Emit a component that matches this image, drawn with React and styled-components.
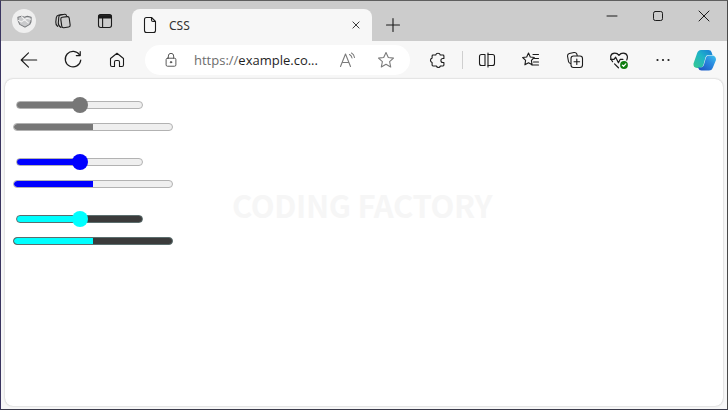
import React from 'react'
import styled, { createGlobalStyle } from 'styled-components'

const Global = createGlobalStyle`
  html, body { margin: 0; padding: 0; background: #f7f7f7; overflow: hidden; }
  * { box-sizing: border-box; }
`

const Win = styled.div`
  width: 728px;
  height: 410px;
  display: flex;
  flex-direction: column;
  overflow: hidden;
  background: #f7f7f7;
  border-top: 1px solid #5f5f5f;
  border-left: 1px solid #3a3560;
  border-right: 1px solid #4a4a4a;
  border-bottom: 1px solid #3a3a4a;
  font-family: "Open Sans", "Noto Sans", sans-serif;
`
const TabBar = styled.div`
  height: 40px;
  flex: none;
  display: flex;
  align-items: flex-end;
  background: #cccccc;
`
const TabTools = styled.div`
  width: 131px;
  height: 40px;
  flex: none;
  display: flex;
  align-items: center;
  padding-left: 11px;
`
const TabTool = styled.div`
  width: ${p => p.$w || 40}px;
  height: 30px;
  flex: none;
  display: flex;
  align-items: center;
  justify-content: center;
`
const Profile = styled.div`
  width: 24px;
  height: 24px;
  border-radius: 50%;
  background: #efefef;
  display: flex;
  align-items: center;
  justify-content: center;
`
const Tab = styled.div`
  width: 240px;
  height: 32px;
  flex: none;
  display: flex;
  align-items: center;
  padding: 0 9px 0 9px;
  background: #f7f7f7;
  border-radius: 8px 8px 0 0;
`
const TabTitle = styled.span`
  flex: 1;
  margin-left: 10px;
  font-family: "Noto Sans", sans-serif;
  font-size: 12px;
  color: #333;
`
const NewTab = styled.div`
  width: 42px;
  height: 32px;
  flex: none;
  display: flex;
  align-items: center;
  justify-content: center;
`
const Caption = styled.div`
  margin-left: auto;
  height: 40px;
  align-self: flex-start;
  display: flex;
`
const CaptionBtn = styled.div`
  width: 46px;
  height: 30px;
  flex: none;
  display: flex;
  align-items: center;
  justify-content: center;
`
const Toolbar = styled.div`
  height: 38px;
  flex: none;
  display: flex;
  align-items: center;
  padding-left: 6px;
`
const ToolBtn = styled.div`
  width: 44px;
  height: 30px;
  flex: none;
  display: flex;
  align-items: center;
  justify-content: center;
  padding-right: ${p => p.$pr || 0}px;
`
const Address = styled.div`
  width: 265px;
  height: 30px;
  flex: none;
  margin: 0 6px;
  display: flex;
  align-items: center;
  padding: 0 15px 0 18px;
  background: #fff;
  border-radius: 15px;
`
const Url = styled.span`
  flex: 1;
  margin-left: 15px;
  font-size: 13px;
  color: #1f1f1f;
  white-space: nowrap;
  & > i { font-style: normal; color: #6d6d6d; }
`
const AddrIcons = styled.div`
  display: flex;
  align-items: center;
  gap: 20px;
`
const Divider = styled.div`
  width: 1px;
  height: 18px;
  flex: none;
  margin: 0 2px;
  background: #cfcfcf;
`
const Page = styled.main`
  position: relative;
  flex: 1;
  margin: 0 4px 3px 4px;
  padding: 18px 8px;
  background: #fff;
  border-radius: 8px;
  box-shadow: 0 0 2px rgba(0, 0, 0, 0.28);
`
const Watermark = styled.div`
  position: absolute;
  left: 227px;
  top: 103px;
  font-family: "Noto Sans CJK KR", "Noto Sans", sans-serif;
  font-weight: 700;
  font-size: 31px;
  letter-spacing: -0.35px;
  line-height: 46px;
  color: #f6f6f6;
  white-space: nowrap;
`
const Group = styled.section`
  display: flex;
  flex-direction: column;
  align-items: flex-start;
  gap: 10px;
  margin-bottom: 23px;
`
const Range = styled.input.attrs({ type: 'range' })`
  -webkit-appearance: none;
  appearance: none;
  display: block;
  width: 127px;
  height: 16px;
  margin: 0 0 0 3px;
  padding: 0;
  background: transparent;
  &::-webkit-slider-runnable-track {
    height: 8px;
    border-radius: 4px;
    border: 1px solid ${p => p.$border};
    background: linear-gradient(to right, ${p => p.$fill} 50%, ${p => p.$track} 50%);
  }
  &::-webkit-slider-thumb {
    -webkit-appearance: none;
    width: 16px;
    height: 16px;
    margin-top: -5px;
    border-radius: 50%;
    background: ${p => p.$fill};
  }
`
const Progress = styled.progress`
  -webkit-appearance: none;
  appearance: none;
  display: block;
  width: 160px;
  height: 8px;
  border: 0;
  &::-webkit-progress-bar {
    border-radius: 4px;
    border: 1px solid ${p => p.$border};
    background: ${p => p.$track};
    overflow: hidden;
  }
  &::-webkit-progress-value {
    background: ${p => p.$fill};
    border-radius: 3px 0 0 3px;
  }
`
const Svg = styled.svg`
  display: block;
  flex: none;
  fill: none;
  stroke: ${p => p.$stroke || '#1b1b1b'};
  stroke-width: ${p => p.$sw || 1.1};
  stroke-linecap: round;
  stroke-linejoin: round;
`

const Icon = ({ size = 18, stroke, sw, children }) => (
  <Svg width={size} height={size} viewBox="0 0 18 18" $stroke={stroke} $sw={sw}>{children}</Svg>
)

const groups = [
  { fill: '#777777', track: '#efefef', border: '#b2b2b2' },
  { fill: '#0000ff', track: '#efefef', border: '#b2b2b2' },
  { fill: '#00ffff', track: '#3b3b3b', border: '#5c6e6e' },
]

const App = () => (
  <>
    <Global />
    <Win>
      <TabBar>
        <TabTools>
          <TabTool $w={24}>
            <Profile>
              <Icon size={17} stroke="#77797c" sw={1.1}>
                <path d="M2 4.500 6 3.500l3 1 3-1 4 1q.5 5-1.500 7.500L9.500 15 4 12Q1.800 9 2 4.500z" fill="#c9cacc" />
                <path d="M2.500 8 6 9.500l3-2.500 4 3.500M6 3.500 9 7l2.500-1.500 4 1" stroke="#f2f2f2" />
              </Icon>
            </Profile>
          </TabTool>
          <TabTool $w={54}>
            <Icon>
              <rect x="7.200" y="5" width="8.500" height="10.500" rx="1.800" transform="rotate(-8 11 10)" />
              <path d="M12.500 3.500q-.3-1.300-1.700-1.200L6.500 3Q5 3.300 4.800 5L4.300 11q0 3 2.700 4.500" />
              <path d="M9 2.500 5 3q-2.400.4-2.700 2.500L1.800 10q-.2 2.700 1.800 4.300" />
            </Icon>
          </TabTool>
          <TabTool $w={30}>
            <Icon>
              <rect x="2.500" y="2.500" width="13" height="13" rx="2.200" />
              <path d="M3 3.200h12v2.800H3z" fill="#1b1b1b" />
              <path d="M6.600 6v9" />
            </Icon>
          </TabTool>
        </TabTools>
        <Tab>
          <Icon>
            <path d="M3.500 3.500q0-2 2-2h5L14.500 5.500v9q0 2-2 2h-7q-2 0-2-2z" />
            <path d="M10.500 1.500v2.500q0 1.500 1.500 1.500h2.500" />
          </Icon>
          <TabTitle>CSS</TabTitle>
          <Icon size={14}>
            <path d="M5 5l8 8M13 5l-8 8" />
          </Icon>
        </Tab>
        <NewTab>
          <Icon>
            <path d="M9 2.500v13M2.500 9h13" />
          </Icon>
        </NewTab>
        <Caption>
          <CaptionBtn>
            <Icon size={18} sw={1}><path d="M4 9h10" /></Icon>
          </CaptionBtn>
          <CaptionBtn>
            <Icon size={18} sw={1}><rect x="4.500" y="4.500" width="9" height="9" rx="1.800" /></Icon>
          </CaptionBtn>
          <CaptionBtn>
            <Icon size={18} sw={1}><path d="M4 4l10 10M14 4 4 14" /></Icon>
          </CaptionBtn>
        </Caption>
      </TabBar>
      <Toolbar>
        <ToolBtn>
          <Icon size={18}>
            <path d="M1.200 9h15.500M8.500 1.800 1.200 9l7.300 7.200" />
          </Icon>
        </ToolBtn>
        <ToolBtn>
          <Icon size={20}>
            <path d="M15 4.500A7 7 0 1 0 16 9" />
            <path d="M15.500 1.500v3.500H12" />
          </Icon>
        </ToolBtn>
        <ToolBtn>
          <Icon>
            <path d="M2.500 7.500 9 2.200l6.500 5.300v6.500q0 1.500-1.500 1.500h-2.500v-4.500q0-1.500-1.500-1.500H8q-1.500 0-1.500 1.500v4.500H4q-1.500 0-1.500-1.500z" />
          </Icon>
        </ToolBtn>
        <Address>
          <Icon size={16} stroke="#555" sw={1.1}>
            <rect x="3.500" y="7" width="11" height="9" rx="1.500" />
            <path d="M6 7V4.500a3 3 0 0 1 6 0V7" />
            <circle cx="9" cy="11.500" r=".8" fill="#555" />
          </Icon>
          <Url><i>https://</i>example.co...</Url>
          <AddrIcons>
            <Icon stroke="#7b7b7b" sw={1.1}>
              <path d="M1.500 15.500 6.500 3l5 12.500M3.200 11.500h6.600" />
              <path d="M10.500 3.500q2 1 2.500 3.500M12.500 2q2.500 1.300 3 4.500" />
            </Icon>
            <Icon stroke="#7b7b7b" sw={1.1}>
              <path d="M9 1.500l2.300 5 5.200.6-3.900 3.500 1.100 5.400L9 13.300 4.300 16l1.100-5.400L1.500 7.100l5.200-.6z" />
            </Icon>
          </AddrIcons>
        </Address>
        <ToolBtn>
          <Icon>
            <path d="M6.700 4a2.400 2.400 0 0 1 4.600 0h2.700q.9 0 .9.900v2.600h-1a2 2 0 0 0 0 4h1v2.600q0 .9-.9.900h-2.600a2.100 2.100 0 0 1-4 0H4q-.9 0-.9-.900v-2.600a2.300 2.300 0 0 1 0-4.400V4.900q0-.9.9-.9z" />
          </Icon>
        </ToolBtn>
        <Divider />
        <ToolBtn>
          <Icon>
            <path d="M7 3.500H3.500q-2 0-2 2v7q0 2 2 2H7z" />
            <path d="M10 2v14" />
            <path d="M10 3.500h4.500q2 0 2 2v7q0 2-2 2H10" />
          </Icon>
        </ToolBtn>
        <ToolBtn>
          <Icon>
            <path d="M6.500 2 8.300 6l4 .5-2.900 2.800.7 4.500-3.600-2.100-3.600 2.100.7-4.500L.7 6.500l4-.5z" />
            <path d="M11 3.500h5.500M12.500 7.500h4M11.500 11h5M10 14h6.500" />
          </Icon>
        </ToolBtn>
        <ToolBtn>
          <Icon>
            <path d="M4.500 12.500Q2.800 12 2.500 10.500L1.500 5q0-2 1.800-2.500L8 1.500q2-.3 2.800 1.500l.4 1.500" />
            <rect x="5" y="5" width="11.500" height="11.500" rx="2.500" />
            <path d="M10.800 8v5.500M8 10.800h5.600" />
          </Icon>
        </ToolBtn>
        <ToolBtn>
          <Icon size={20}>
            <path d="M3.200 10.500Q1 8 1.500 5.500 2.200 2.800 5.200 2.800 7.600 2.800 9 4.800q1.400-2 3.800-2 3 0 3.700 2.700.3 1.700-.5 3.500" />
            <path d="M1.500 8.500h3l1.500-2 2.500 5 1.500-3h2.500M5 12.500l3.500 3.500" />
            <circle cx="13.500" cy="13.500" r="3.500" fill="#107c10" stroke="none" />
            <path d="M12 13.600l1.100 1.100 2-2.200" stroke="#fff" />
          </Icon>
        </ToolBtn>
        <ToolBtn>
          <Icon>
            <circle cx="3.500" cy="9" r="1.100" fill="#1b1b1b" stroke="none" />
            <circle cx="9" cy="9" r="1.100" fill="#1b1b1b" stroke="none" />
            <circle cx="14.500" cy="9" r="1.100" fill="#1b1b1b" stroke="none" />
          </Icon>
        </ToolBtn>
        <ToolBtn $pr={4}>
          <Svg width="26" height="26" viewBox="0 0 26 26" $stroke="none">
            <defs>
              <linearGradient id="cpA" x1="0" y1="1" x2="1" y2="0">
                <stop offset="0" stopColor="#37c98f" />
                <stop offset=".55" stopColor="#1fb4c8" />
                <stop offset="1" stopColor="#1a78d8" />
              </linearGradient>
              <linearGradient id="cpB" x1="0" y1="1" x2="1" y2="0">
                <stop offset="0" stopColor="#1a4fc0" />
                <stop offset=".6" stopColor="#2a8ae0" />
                <stop offset="1" stopColor="#3cc4ee" />
              </linearGradient>
            </defs>
            <path d="M9 3h7.500q2.500 0 3 2l1 3h-4q-2.200 0-3 2.200l-2 7.500q-1 3.300-4 3.300H5Q1 20.500 1.500 16.500L5 6.500Q6 3 9 3z" fill="url(#cpA)" />
            <path d="M17 23.500H9.500q-2.500 0-3-2l-.5-1H8.500q2.700 0 3.500-3l2-7q.7-2 2.800-2h3.200q4 .2 4 4.500l-3.300 8Q19.800 23.500 17 23.500z" fill="url(#cpB)" />
          </Svg>
        </ToolBtn>
      </Toolbar>
      <Page>
        <Watermark>CODING FACTORY</Watermark>
        {groups.map(g => (
          <Group key={g.fill}>
            <Range defaultValue={50} $fill={g.fill} $track={g.track} $border={g.border} />
            <Progress value={50} max={100} $fill={g.fill} $track={g.track} $border={g.border} />
          </Group>
        ))}
      </Page>
    </Win>
  </>
)

export default App
